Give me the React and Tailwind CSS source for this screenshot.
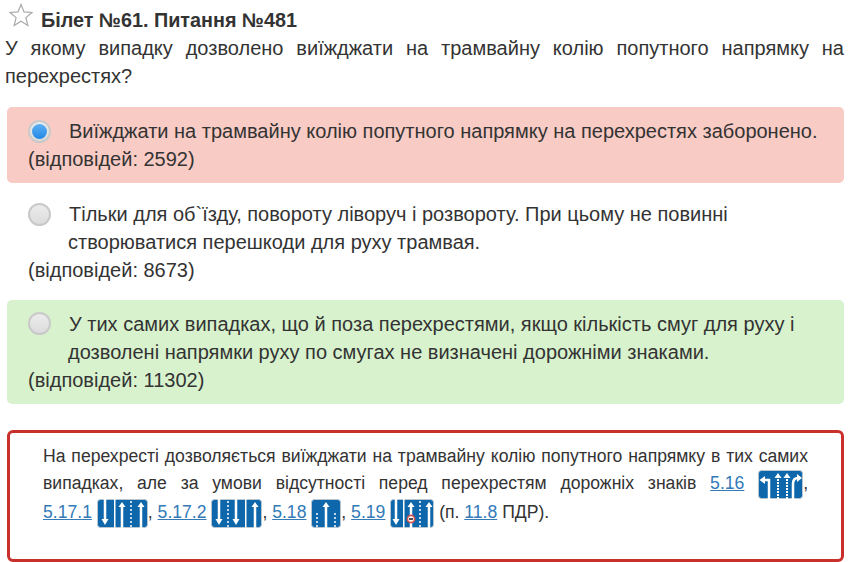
import React from 'react';

function Star() {
  return (
    <svg width="24" height="24" viewBox="0 0 24 24" className="mt-[3px] shrink-0">
      <path d="M12 1.5l3 7.4 8 .6-6.1 5.1 1.9 7.8L12 18.2l-6.8 4.2 1.9-7.8L1 9.5l8-.6z" fill="#fff" stroke="#a8a8a8" strokeWidth="1.2" />
    </svg>
  );
}

function Radio({ checked }) {
  return (
    <span className="flex h-[23px] w-[23px] shrink-0 items-center justify-center rounded-full border-2 border-[#c9c9c9] bg-gradient-to-b from-[#ececec] to-[#dcdcdc]">
      {checked && <span className="h-[15px] w-[15px] rounded-full bg-gradient-to-b from-[#5cb0f2] to-[#1e88e5]" />}
    </span>
  );
}

// white road sign arrows, drawn on a blue plate
function Up({ x, top = 3 }) {
  return (
    <g fill="#fff">
      <rect x={x - 1.25} y={top + 4} width="2.5" height={25 - top} />
      <path d={`M${x - 3.5} ${top + 5}L${x} ${top}L${x + 3.5} ${top + 5}z`} />
    </g>
  );
}

function Down({ x }) {
  return (
    <g fill="#fff">
      <rect x={x - 1.25} y="0" width="2.5" height="23" />
      <path d={`M${x - 3.5} 20L${x} 26L${x + 3.5} 20z`} />
    </g>
  );
}

function Dash({ x, top = 2 }) {
  return <line x1={x} y1={top} x2={x} y2="28" stroke="#fff" strokeWidth="1.5" strokeDasharray="2 2" />;
}

function Line({ x }) {
  return <rect x={x} y="0" width="1.5" height="29" fill="#fff" />;
}

function Plate({ w, children }) {
  return (
    <svg width={w} height="29" viewBox={`0 0 ${w} 29`} className="inline-block align-[-10px]">
      <rect x="0.5" y="0.5" width={w - 1} height="28" rx="3" fill="#0f67ab" stroke="#b9c6d0" />
      {children}
    </svg>
  );
}

function Sign516() {
  return (
    <Plate w={45}>
      <path d="M11 29V10H5" fill="none" stroke="#fff" strokeWidth="2.5" />
      <path d="M7 6L1.5 10L7 14z" fill="#fff" />
      <path d="M20 29V8" stroke="#fff" strokeWidth="2" strokeDasharray="2 1" />
      <path d="M16.5 8L20 3L23.5 8z" fill="#fff" />
      <path d="M29 29V8" stroke="#fff" strokeWidth="2" strokeDasharray="2 1" />
      <path d="M25.5 8L29 3L32.5 8z" fill="#fff" />
      <path d="M35 29V14Q35 8 40 8" fill="none" stroke="#fff" strokeWidth="2.5" />
      <path d="M39 4L44 8L39 12z" fill="#fff" />
    </Plate>
  );
}

function Sign5171() {
  return (
    <Plate w={51}>
      <Down x={8} />
      <Line x={17} />
      <Up x={25} />
      <Dash x={34} />
      <Up x={44} />
    </Plate>
  );
}

function Sign5172() {
  return (
    <Plate w={51}>
      <Down x={8} />
      <Dash x={17} />
      <Down x={25} />
      <Line x={34} />
      <Up x={44} />
    </Plate>
  );
}

function Sign518() {
  return (
    <Plate w={30}>
      <Up x={15} />
      <Dash x={6} top={14} />
      <Dash x={24} top={14} />
    </Plate>
  );
}

function Sign519() {
  return (
    <Plate w={44}>
      <Down x={6} />
      <Line x={13} />
      <Up x={21} />
      <Dash x={30} />
      <Up x={39} />
      <circle cx="21" cy="20" r="3.6" fill="#fff" stroke="#d9534f" strokeWidth="1.6" />
      <rect x="19" y="19.2" width="4" height="1.6" fill="#222" />
    </Plate>
  );
}

function Ref({ children }) {
  return <a href="#" className="text-[#337ab7] underline">{children}</a>;
}

function Option({ bg, checked, count, children, className, radioClass }) {
  return (
    <div className={`rounded-[5px] pl-[21px] pr-2 ${bg} ${className}`}>
      <div className="flex">
        <div className={radioClass}><Radio checked={checked} /></div>
        <p className="ml-[17px] indent-[1px]">{children}</p>
      </div>
      <p>(відповідей: {count})</p>
    </div>
  );
}

export default function App() {
  return (
    <div className="h-[562px] w-[849px] overflow-hidden bg-white px-[5px] font-['Liberation_Sans',Arial,sans-serif] text-[20px] leading-[28px] text-[#333]">
      <div className="flex h-[34px] items-start gap-[8px] pl-[4px]">
        <Star />
        <h1 className="mt-[6px] text-[19.8px] font-bold">Білет №61. Питання №481</h1>
      </div>
      <p className="text-justify">
        У якому випадку дозволено виїжджати на трамвайну колію попутного напрямку на перехрестях?
      </p>
      <div className="ml-[2px] mt-[17px]">
        <Option bg="bg-[#f9cbc5]" checked count="2592" className="h-[76px] pt-[10px]" radioClass="mt-[3px]">
          Виїжджати на трамвайну колію попутного напрямку на перехрестях заборонено.
        </Option>
        <Option bg="bg-white" count="8673" className="mt-[10px] h-[97px] pt-[7px]" radioClass="mt-[3px]">
          Тільки для об`їзду, повороту ліворуч і розвороту. При цьому не повинні створюватися перешкоди для руху трамвая.
        </Option>
        <Option bg="bg-[#d8f2cd]" count="11302" className="mt-[10px] h-[104px] pt-[10px]" radioClass="mt-[2px]">
          У тих самих випадках, що й поза перехрестями, якщо кількість смуг для руху і дозволені напрямки руху по смугах не визначені дорожніми знаками.
        </Option>
        <div className="mt-[26px] h-[132px] rounded-[6px] border-[3px] border-[#c9302c] px-[33px] pt-[10px] text-justify text-[17.6px] leading-[27px]">
          На перехресті дозволяється виїжджати на трамвайну колію попутного напрямку в тих самих випадках, але за умови відсутності перед перехрестям дорожніх знаків{' '}
          <span className="whitespace-nowrap"><Ref>5.16</Ref> <Sign516 />,</span>{' '}
          <span className="whitespace-nowrap"><Ref>5.17.1</Ref> <Sign5171 />,</span>{' '}
          <span className="whitespace-nowrap"><Ref>5.17.2</Ref> <Sign5172 />,</span>{' '}
          <span className="whitespace-nowrap"><Ref>5.18</Ref> <Sign518 />,</span>{' '}
          <span className="whitespace-nowrap"><Ref>5.19</Ref> <Sign519 /></span> (п. <Ref>11.8</Ref> ПДР).
        </div>
      </div>
    </div>
  );
}
